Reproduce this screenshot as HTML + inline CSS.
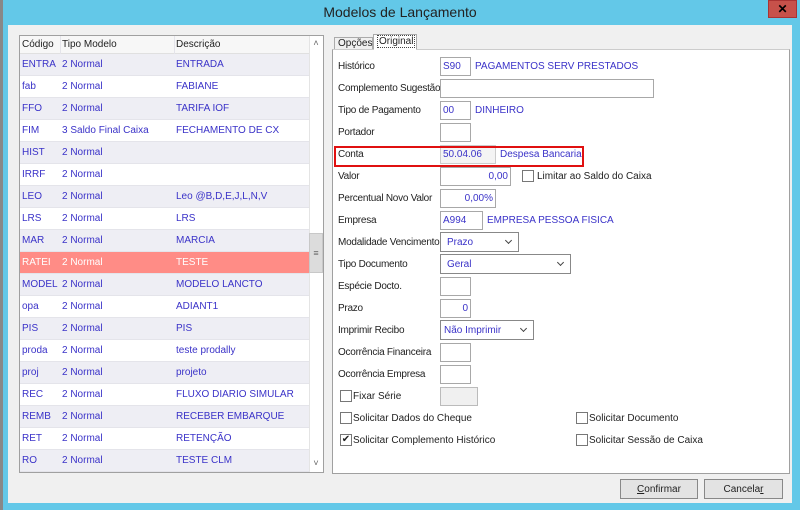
<!DOCTYPE html>
<html><head><meta charset="utf-8"><style>
*{box-sizing:border-box;margin:0;padding:0}
body{width:800px;height:510px;overflow:hidden;background:#63c8e8;font-family:"Liberation Sans",sans-serif;font-size:10px;color:#222;position:relative}
.a{position:absolute;white-space:nowrap}
.title{left:0;top:0;width:800px;height:25px;text-align:center;line-height:24px;font-size:14px;color:#222}
.close{left:768px;top:0;width:29px;height:18px;background:#c7514a;border:1px solid #a33;color:#000;font-weight:bold;font-size:12px;text-align:center;line-height:16px}
.client{left:8px;top:25px;width:784px;height:478px;background:#f0f0f0}
.grid{left:19px;top:35px;width:305px;height:438px;background:#fff;border:1px solid #a0a0a0}
.row{position:absolute;left:0;width:289px;height:22px;line-height:22px;color:#3a32c8;border-bottom:1px solid #e4e4ea}
.row span{position:absolute;top:0}
.c1{left:2px}.c2{left:42px}.c3{left:156px}
.vl{position:absolute;top:0;width:1px;height:436px;background:#e4e4ea}
.lbl{position:absolute;left:338px;color:#222;letter-spacing:-0.25px}
.in{position:absolute;left:440px;height:19px;border:1px solid #a8a8a8;background:#fff;color:#3a32c8;line-height:18px;padding:0 2px}
.blue{color:#3a32c8}
.cb{position:absolute;width:12px;height:12px;border:1px solid #777;background:#fff}
.sel{position:absolute;left:440px;height:20px;border:1px solid #888;background:#fff;color:#3a32c8;line-height:19px;padding-left:6px}
.sel:after{content:"";position:absolute;right:7px;top:5px;width:4px;height:4px;border-right:1.5px solid #444;border-bottom:1.5px solid #444;transform:rotate(45deg)}
.btn{position:absolute;top:479px;height:20px;border:1px solid #888;background:#e3e3e3;text-align:center;line-height:19px}
</style></head><body>
<div class="a" style="left:0;top:0;width:3px;height:510px;background:#888"></div>
<div class="a title">Modelos de Lançamento</div>
<div class="a close">✕</div>
<div class="a client"></div>

<div class="a grid">
 <div class="a" style="left:0;top:0;width:289px;height:18px;background:#f7f7f7;border-bottom:1px solid #e0e0e0"></div>
 <span class="a" style="left:2px;top:3px">Código</span>
 <span class="a" style="left:42px;top:3px">Tipo Modelo</span>
 <span class="a" style="left:156px;top:3px">Descrição</span>
 <div class="vl" style="left:40px"></div><div class="vl" style="left:154px"></div>
 <div class="a" style="left:289px;top:0;width:14px;height:436px;background:#fff;border-left:1px solid #e4e4e4"></div>
 <div class="a" style="left:289px;top:2px;width:14px;text-align:center;font-size:9px;color:#666">˄</div>
 <div class="a" style="left:289px;top:197px;width:14px;height:40px;background:#dcdcdc;border:1px solid #c8c8c8;text-align:center;line-height:38px;color:#666;font-size:9px">≡</div>
 <div class="a" style="left:289px;top:422px;width:14px;text-align:center;font-size:9px;color:#666">˅</div>
 <div id="rows"></div>
</div>

<div class="a" style="left:334px;top:37px;width:39px;height:13px;border:1px solid #aaa;border-bottom:none;background:#f0f0f0;padding-left:3px;line-height:12px">Opções</div>
<div class="a" style="left:373px;top:34px;width:44px;height:16px;border:1px solid #aaa;border-bottom:none;background:#fff;line-height:14px;padding-left:3px"><span style="border:1px dotted #444;padding:0 1px">Original</span></div>
<div class="a" style="left:332px;top:49px;width:458px;height:425px;background:#fff;border:1px solid #a0a0a0;border-top:1px solid #ccc"></div>
<div class="a" style="left:374px;top:48px;width:42px;height:3px;background:#fff"></div>

<div id="form"></div>

<div class="a" style="left:334px;top:146px;width:250px;height:21px;border:2px solid #e01010"></div>

<div class="btn" style="left:620px;width:78px"><u>C</u>onfirmar</div>
<div class="btn" style="left:704px;width:79px">Cancela<u>r</u></div>

<script>
var data=[["ENTRA","2 Normal","ENTRADA"],["fab","2 Normal","FABIANE"],["FFO","2 Normal","TARIFA IOF"],["FIM","3 Saldo Final Caixa","FECHAMENTO DE CX"],["HIST","2 Normal",""],["IRRF","2 Normal",""],["LEO","2 Normal","Leo @B,D,E,J,L,N,V"],["LRS","2 Normal","LRS"],["MAR","2 Normal","MARCIA"],["RATEI","2 Normal","TESTE"],["MODEL","2 Normal","MODELO LANCTO"],["opa","2 Normal","ADIANT1"],["PIS","2 Normal","PIS"],["proda","2 Normal","teste prodally"],["proj","2 Normal","projeto"],["REC","2 Normal","FLUXO DIARIO SIMULAR"],["REMB","2 Normal","RECEBER EMBARQUE"],["RET","2 Normal","RETENÇÃO"],["RO","2 Normal","TESTE CLM"]];
var h="";data.forEach(function(r,i){var bg=i==9?"#ff8c86;color:#fff":(i%2==0?"#eeeef4":"#fff");h+='<div class="row" style="top:'+(18+i*22)+'px;background:'+bg+'"><span class="c1">'+r[0]+'</span><span class="c2">'+r[1]+'</span><span class="c3">'+r[2]+'</span></div>';});
document.getElementById("rows").innerHTML=h;
var L=["Histórico","Complemento Sugestão","Tipo de Pagamento","Portador","Conta","Valor","Percentual Novo Valor","Empresa","Modalidade Vencimento","Tipo Documento","Espécie Docto.","Prazo","Imprimir Recibo","Ocorrência Financeira","Ocorrência Empresa"];
var f="";L.forEach(function(t,i){f+='<div class="lbl a" style="top:'+(61+i*22)+'px">'+t+'</div>';});
function inp(i,w,txt,ex){return '<div class="in" style="top:'+(57+i*22)+'px;width:'+w+'px;'+(ex||'')+'">'+(txt||'')+'</div>';}
f+=inp(0,31,"S90")+'<div class="a blue" style="left:475px;top:61px">PAGAMENTOS SERV PRESTADOS</div>';
f+=inp(1,214);
f+=inp(2,31,"00")+'<div class="a blue" style="left:475px;top:105px">DINHEIRO</div>';
f+=inp(3,31);
f+=inp(4,56,"50.04.06","background:#f4f4f4;border-color:#ccc")+'<div class="a blue" style="left:500px;top:149px">Despesa Bancaria</div>';
f+=inp(5,71,"0,00","text-align:right");
f+='<div class="cb" style="left:522px;top:170px"></div><div class="a" style="left:537px;top:171px">Limitar ao Saldo do Caixa</div>';
f+=inp(6,56,"0,00%","text-align:right");
f+=inp(7,43,"A994")+'<div class="a blue" style="left:487px;top:215px">EMPRESA PESSOA FISICA</div>';
f+='<div class="sel" style="top:232px;width:79px">Prazo</div>';
f+='<div class="sel" style="top:254px;width:131px">Geral</div>';
f+=inp(10,31);
f+=inp(11,31,"0","text-align:right");
f+='<div class="sel" style="top:320px;width:94px;padding-left:3px">Não Imprimir</div>';
f+=inp(13,31);f+=inp(14,31);
f+='<div class="cb" style="left:340px;top:390px"></div><div class="a" style="left:353px;top:391px">Fixar Série</div>';
f+='<div class="in" style="top:387px;width:38px;background:#f0f0f0;border-color:#bbb"></div>';
f+='<div class="cb" style="left:340px;top:412px"></div><div class="a" style="left:353px;top:413px">Solicitar Dados do Cheque</div>';
f+='<div class="cb" style="left:340px;top:434px;text-align:center;line-height:10px;font-size:10px">✔</div><div class="a" style="left:353px;top:435px">Solicitar Complemento Histórico</div>';
f+='<div class="cb" style="left:576px;top:412px"></div><div class="a" style="left:589px;top:413px">Solicitar Documento</div>';
f+='<div class="cb" style="left:576px;top:434px"></div><div class="a" style="left:589px;top:435px">Solicitar Sessão de Caixa</div>';
document.getElementById("form").innerHTML=f;
</script>
</body></html>
